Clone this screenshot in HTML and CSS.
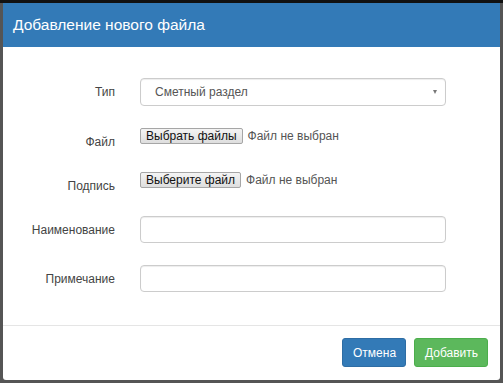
FILE: index.html
```html
<!DOCTYPE html>
<html lang="ru">
<head>
  <meta charset="UTF-8"/>
  <meta name="viewport" content="width=device-width, initial-scale=1.0"/>
  <title>Добавление нового файла</title>
  <link rel="stylesheet" href="styles.css">
</head>
<body>
  <div class="page-strip"></div>

  <div class="modal">
    <div class="modal-header">
      <h4 class="modal-title">Добавление нового файла</h4>
    </div>

    <div class="modal-body">
      <div class="row row-select">
        <label class="row-label">Тип</label>
        <div class="select">
          <span>Сметный раздел</span>
          <span class="caret"></span>
        </div>
      </div>

      <div class="row row-file">
        <label class="row-label label-low">Файл</label>
        <div class="file-field">
          <button class="file-btn">Выбрать файлы</button>
          <span class="file-name">Файл не выбран</span>
        </div>
      </div>

      <div class="row row-file">
        <label class="row-label label-low">Подпись</label>
        <div class="file-field">
          <button class="file-btn">Выберите файл</button>
          <span class="file-name">Файл не выбран</span>
        </div>
      </div>

      <div class="row row-input">
        <label class="row-label">Наименование</label>
        <input class="text-input" type="text">
      </div>

      <div class="row">
        <label class="row-label">Примечание</label>
        <input class="text-input" type="text">
      </div>
    </div>

    <div class="modal-footer">
      <button class="btn btn-primary">Отмена</button>
      <button class="btn btn-success">Добавить</button>
    </div>
  </div>
</body>
</html>
```

FILE: styles.css
```css
body {
  margin: 0;
  background: #555;
  font-family: "Liberation Sans", Arial, sans-serif;
  font-size: 12px;
  color: #444;
}

.page-strip {
  height: 3px;
  background: #111;
}

.modal {
  margin: 0 3px;
  height: 377px;
  background: #fff;
  border-radius: 0 0 3px 3px;
  display: flex;
  flex-direction: column;
}

.modal-header {
  height: 44px;
  background: #337ab7;
  padding: 0 10px;
  display: flex;
  align-items: center;
}

.modal-title {
  margin: 0;
  font-size: 15.5px;
  font-weight: normal;
  color: #fff;
}

.modal-body {
  flex: 1;
  padding-top: 31px;
}

.row {
  display: flex;
  align-items: center;
}

.row-select,
.row-input {
  margin-bottom: 22px;
}

.row-file {
  margin-bottom: 28px;
  height: 16px;
}

.row-label {
  width: 112px;
  margin-right: 25px;
  text-align: right;
  font-size: 12px;
  color: #444;
}

.label-low {
  padding-top: 12px;
}

.select {
  width: 306px;
  height: 28px;
  box-sizing: border-box;
  border: 1px solid #ccc;
  border-radius: 4px;
  padding: 0 8px 0 14px;
  display: flex;
  align-items: center;
  justify-content: space-between;
  color: #555;
  box-shadow: inset 0 1px 1px rgba(0,0,0,0.075);
}

.caret {
  width: 0;
  height: 0;
  border-left: 2px solid transparent;
  border-right: 2px solid transparent;
  border-top: 4px solid #777;
}

.file-field {
  display: flex;
  align-items: center;
}

.file-btn {
  height: 16px;
  padding: 0 5px;
  font-family: inherit;
  font-size: 12px;
  color: #111;
  background: linear-gradient(#f4f4f4, #dedede);
  border: 1px solid #a6a6a6;
  border-radius: 2px;
  line-height: 14px;
}

.file-name {
  margin-left: 5px;
  color: #555;
}

.text-input {
  width: 306px;
  height: 27px;
  box-sizing: border-box;
  margin: 0;
  border: 1px solid #ccc;
  border-radius: 4px;
  box-shadow: inset 0 1px 1px rgba(0,0,0,0.075);
}

.modal-footer {
  border-top: 1px solid #e5e5e5;
  padding: 12px 12px 13px;
  display: flex;
  justify-content: flex-end;
  gap: 8px;
}

.btn {
  height: 29px;
  padding: 0 10px;
  border: 1px solid transparent;
  border-radius: 3px;
  font-family: inherit;
  font-size: 12px;
  color: #fff;
}

.btn-primary {
  background: #337ab7;
  border-color: #2e6da4;
  width: 64px;
}

.btn-success {
  background: #5cb85c;
  border-color: #4cae4c;
  width: 74px;
}
```
